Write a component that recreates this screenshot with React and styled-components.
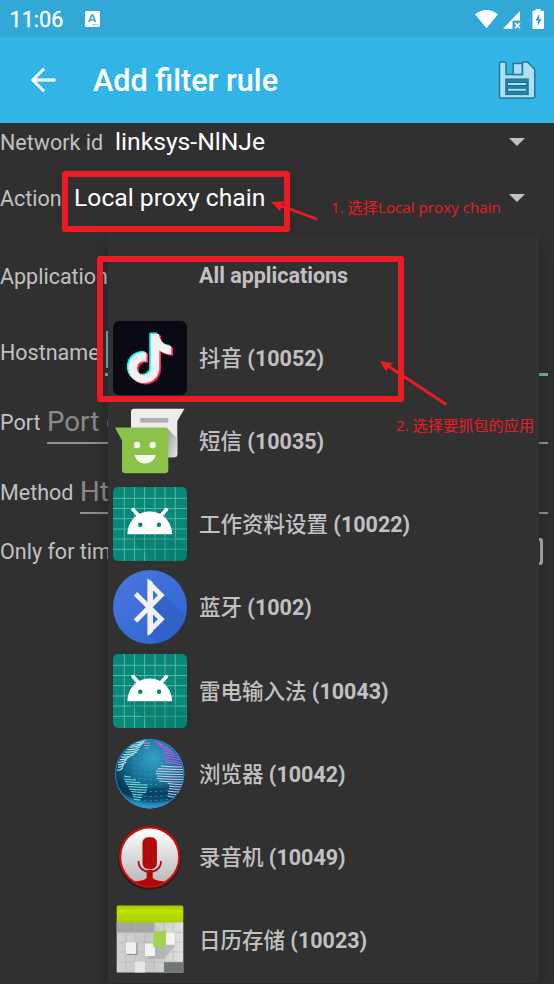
import React from 'react';
import styled, { createGlobalStyle } from 'styled-components';

const GlobalStyle = createGlobalStyle`
  * { box-sizing: border-box; }
  html, body { margin: 0; padding: 0; background: #303030; overflow: hidden; }
  body { font-family: Roboto, "Noto Sans CJK SC", sans-serif; }
`;

const Screen = styled.div`
  position: relative;
  width: 554px;
  height: 984px;
  overflow: hidden;
  background: #303030;
  display: flex;
  flex-direction: column;
`;

const StatusBar = styled.div`
  height: 37px;
  flex: none;
  background: #32a8d6;
  display: flex;
  align-items: center;
  padding: 0 10px 0 9.500px;
  color: #fff;
`;

const Clock = styled.span`
  font-size: 21.600px;
  font-weight: 400;
  -webkit-text-stroke: 0.3px #fff;
  width: 75px;
  line-height: 37px;
  padding-top: 2px;
`;

const StatusIcons = styled.svg`
  margin-left: auto;
`;

const AppBar = styled.header`
  height: 86px;
  flex: none;
  background: #33b4e6;
  display: flex;
  align-items: center;
  padding: 0 17px 0 30px;
`;

const Title = styled.h1`
  margin: 0 auto 0 35px;
  padding-top: 2px;
  font-size: 30.600px;
  font-weight: 500;
  color: #fff;
  line-height: 36px;
`;

const Form = styled.main`
  display: flex;
  flex-direction: column;
`;

const Row = styled.div`
  height: ${(p) => p.$h}px;
  display: flex;
  align-items: center;
  padding-right: 6px;
`;

const Label = styled.label`
  font-size: 21.500px;
  line-height: 26px;
  padding-top: 2px;
  color: #c1c1c1;
  white-space: nowrap;
  flex: none;
  width: ${(p) => (p.$w ? `${p.$w}px` : 'auto')};
`;

const Select = styled.div`
  flex: 1;
  display: flex;
  align-items: center;
  justify-content: space-between;
  padding-right: 23px;
  color: #fff;
  font-size: 24.700px;
  line-height: 30px;
`;

const Caret = styled.span`
  width: 0;
  height: 0;
  border: 8px solid transparent;
  border-top-color: #c1c1c1;
  border-bottom: 0;
`;

const Input = styled.div`
  flex: 1;
  height: ${(p) => p.$h || 44}px;
  border-bottom: ${(p) => (p.$focus ? '3px solid #70b5ac' : '2px solid #919191')};
  color: #8b8b8b;
  font-size: 27.700px;
  line-height: 44px;
  white-space: nowrap;
`;

const Cursor = styled.span`
  display: block;
  width: 2px;
  height: 37px;
  margin: 2px 0 0 1px;
  background: #70b5ac;
`;

const Checkbox = styled.span`
  width: 27px;
  height: 27px;
  border: 3px solid #b0b0b0;
  border-radius: 3px;
  margin: 0 5px 0 auto;
`;

const Menu = styled.ul`
  position: absolute;
  left: 108px;
  top: 234px;
  width: 431px;
  height: 749px;
  margin: 0;
  padding: 0;
  list-style: none;
  background: #313131;
  border-radius: 3px;
  box-shadow: 0 8px 22px rgba(0, 0, 0, 0.28);
`;

const MenuItem = styled.li`
  height: 83.1px;
  display: flex;
  align-items: center;
  padding: 0 0 1px 5px;
  gap: 12px;
`;

const IconSlot = styled.span`
  display: block;
  width: 74px;
  height: 74px;
  flex: none;
`;

const ItemText = styled.span`
  font-size: 21.500px;
  font-weight: ${(p) => (p.$cjk ? 500 : 700)};
  color: #c1c1c1;
  line-height: 30px;
  padding-top: 2px;
  white-space: nowrap;
`;

const Strong = styled.b`
  font-weight: 700;
`;

const Highlight = styled.div`
  position: absolute;
  left: ${(p) => p.$x}px;
  top: ${(p) => p.$y}px;
  width: ${(p) => p.$w}px;
  height: ${(p) => p.$h}px;
  border: 6px solid #ed1c24;
  border-radius: 3px;
`;

const Note = styled.div`
  position: absolute;
  left: ${(p) => p.$x}px;
  top: ${(p) => p.$y}px;
  color: #ed1c24;
  font-family: "Open Sans", "Noto Sans CJK SC", sans-serif;
  font-size: 15.200px;
  line-height: 22px;
  white-space: nowrap;
`;

const Arrows = styled.svg`
  position: absolute;
  left: 0;
  top: 0;
  pointer-events: none;
`;

function KeyboardBadge() {
  return (
    <svg width="15" height="16" viewBox="0 0 15 16">
      <rect width="15" height="16" rx="1.5" fill="#fff" />
      <path d="M3.9 11.3 L6.8 4 H7.7 L10.6 11.3 M5 9 H9.5" fill="none" stroke="#32a8d6" strokeWidth="1.7" />
      <path d="M7.5 13.8 H13.5" stroke="#32a8d6" strokeWidth="1" strokeDasharray="1.2 .7" />
    </svg>
  );
}

function SystemIcons() {
  return (
    <StatusIcons width="69" height="20" viewBox="475 8 69 20">
      <path d="M475 13.3 Q486.500 4.500 498 13.300 L486.500 27.200 Z" fill="#fff" />
      <path d="M520 10 V19.500 H512.500 V27.800 H503 Z" fill="#fff" />
      <path d="M515 22 l5 5.300 M520 22 l-5 5.300" stroke="#fff" strokeWidth="1.600" />
      <path d="M535.500 9.800 V8 h5 v1.800 H543 a1 1 0 0 1 1 1 V27 a1 1 0 0 1-1 1 H533.500 a1 1 0 0 1-1-1 V10.800 a1 1 0 0 1 1-1Z" fill="#fff" />
      <path d="M539.300 12.800 L535.400 19.600 H537.700 V25 L541.600 18 H539.300 Z" fill="#32a8d6" />
    </StatusIcons>
  );
}

function BackArrow() {
  return (
    <svg width="28" height="26" viewBox="0 0 28 26">
      <path d="M25.500 13 H3 M14 1.700 L2.700 13 L14 24.300" fill="none" stroke="#fff" strokeWidth="2.800" />
    </svg>
  );
}

function SaveIcon() {
  return (
    <svg width="40" height="40" viewBox="0 0 40 40">
      <path d="M4.500 2 H7.500 Q9 2 9 3.500 V14.500 H25.500 V2 H30.500 L37.800 9.500 V36.500 Q37.800 38 36.500 38 H4 Q2.500 38 2.500 36.500 V3.500 Q2.500 2 4.500 2Z" fill="#ade0f5" stroke="#247793" strokeWidth="1.500" />
      <rect x="16.200" y="3.500" width="9" height="11" fill="#ade0f5" stroke="#247793" strokeWidth="1.500" />
      <rect x="8.800" y="19" width="22.400" height="15.500" fill="#2383a8" stroke="#247793" strokeWidth="1.200" />
      <path d="M10.500 24 H29.500 M10.500 29.700 H29.500" stroke="#1b6885" strokeWidth="3.800" />
      <path d="M11 24 H29 M11 29.700 H29" stroke="#ade0f5" strokeWidth="2" />
    </svg>
  );
}

const notePath =
  'M12.525.02c1.31-.02 2.61-.01 3.91-.02.08 1.53.63 3.09 1.75 4.17 1.12 1.11 2.7 1.62 4.24 1.79v4.03c-1.44-.05-2.89-.35-4.2-.97-.57-.26-1.1-.59-1.62-.93-.01 2.92.01 5.84-.02 8.75-.08 1.4-.54 2.79-1.35 3.94-1.31 1.92-3.58 3.17-5.91 3.21-1.43.08-2.86-.31-4.08-1.03-2.02-1.19-3.44-3.37-3.65-5.71-.02-.5-.03-1-.01-1.49.18-1.9 1.12-3.72 2.58-4.96 1.66-1.44 3.98-2.13 6.15-1.72.02 1.48-.04 2.96-.04 4.44-.99-.32-2.15-.23-3.02.37-.63.41-1.11 1.04-1.36 1.75-.21.51-.15 1.07-.14 1.61.24 1.64 1.82 3.02 3.5 2.87 1.12-.01 2.19-.66 2.77-1.61.19-.33.4-.67.41-1.06.1-1.79.06-3.57.07-5.36.01-4.03-.01-8.05.02-12.07z';

function MusicNoteIcon() {
  return (
    <svg width="74" height="74" viewBox="0 0 74 74">
      <rect width="74" height="74" rx="6" fill="#0a0a14" />
      <path d={notePath} transform="translate(10.600 11.600) scale(2.050)" fill="#25f4ee" />
      <path d={notePath} transform="translate(14 14.200) scale(2.050)" fill="#fe2c55" />
      <path d={notePath} transform="translate(12.300 12.900) scale(2.050)" fill="#f1f1f1" />
    </svg>
  );
}

function MessageIcon() {
  return (
    <svg width="74" height="74" viewBox="0 0 74 74">
      <defs>
        <linearGradient id="msgShade" x1="0" y1="0" x2="1" y2="1">
          <stop offset="0" stopColor="#9a9a9a" />
          <stop offset="1" stopColor="#e6e6e6" />
        </linearGradient>
      </defs>
      <path d="M21 4.700 H71.500 L64.300 17 V50 Q64.300 53.300 61 53.300 H21 Q18 53.300 18 50 V8 Q18 4.700 21 4.700Z" fill="#ececec" />
      <path d="M54 24 L64.300 34.500 V50 Q64.300 53.300 61 53.300 H54Z" fill="url(#msgShade)" />
      <rect x="27.300" y="14" width="28" height="4.600" fill="#adadad" />
      <path d="M2 23.600 H52 Q55.300 23.600 55.300 27 V66 Q55.300 69.300 52 69.300 H12.500 Q9 69.300 9 66 V36.600Z" fill="#8bc34a" />
      <circle cx="24" cy="41" r="3.200" fill="#f1f8e9" />
      <circle cx="39.700" cy="41" r="3.200" fill="#f1f8e9" />
      <path d="M21.300 51 H43 Q40 59.600 32.200 59.600 Q24.300 59.600 21.300 51Z" fill="#f7fbf0" />
    </svg>
  );
}

function AndroidIcon() {
  const lines = [11.300, 21.500, 31.600, 42, 52, 62.300];
  return (
    <svg width="74" height="74" viewBox="0 0 74 74">
      <rect width="74" height="74" rx="5" fill="#078878" />
      {lines.map((v) => (
        <path key={v} d={`M${v} 0 V74 M0 ${v} H74`} stroke="#66b8ad" strokeWidth="0.900" />
      ))}
      <path d="M14.300 47 L40 74 H69 Q74 74 74 69 V62 L59 47Z" fill="#00695c" opacity="0.250" />
      <path d="M14.300 47.300 C15 34 24 24.500 36.700 24.500 C49 24.500 58.500 34 59.200 47.300Z" fill="#fff" />
      <path d="M20 22.500 L26.500 29.500 M53.500 22.500 L47 29.500" stroke="#fff" strokeWidth="3.400" strokeLinecap="round" />
      <circle cx="27.300" cy="37.700" r="2.300" fill="#078878" />
      <circle cx="46" cy="37.700" r="2.300" fill="#078878" />
    </svg>
  );
}

function BluetoothIcon() {
  return (
    <svg width="74" height="74" viewBox="0 0 74 74">
      <defs>
        <linearGradient id="btFill" x1="0" y1="0" x2="1" y2="1">
          <stop offset="0" stopColor="#4a78de" />
          <stop offset="1" stopColor="#2f64d0" />
        </linearGradient>
      </defs>
      <circle cx="37" cy="37" r="37" fill="url(#btFill)" />
      <path d="M51 25 L73 46 Q68 67 45 73 L36 64 L50 50 L38 37Z" fill="#2a58b8" opacity="0.450" />
      <path d="M22.500 23.700 L48.300 49.300 L37 60.300 V14 L48.300 25.200 L22.500 51" fill="none" stroke="#f1f1f1" strokeWidth="4.800" />
      <path d="M34.600 10.300 H37.500 L40 12.800 V61.500 L37 64.500 H34.600Z" fill="#f1f1f1" />
    </svg>
  );
}

function GlobeIcon() {
  const west = [
    [26, 34, 3.5], [22, 33, 5.5], [18, 31, 8], [16, 29, 10], [14, 27, 12.5], [12, 26, 15], [10, 24, 17.5], [8, 21, 20], [7, 16, 22.5], [5, 14, 25], [5, 13, 27.5], [5, 11, 30], [4, 10, 33],
  ];
  const south = [
    [11, 18, 39], [11, 23, 42], [12, 27, 44.5], [13, 35, 47], [15, 34, 49.5], [16, 34, 52], [18, 33, 54.5], [19, 30, 57], [20, 29, 59.5], [21, 27, 62],
  ];
  const northEast = [[42, 50, 5], [45, 55, 7.5], [47, 58, 10], [49, 61, 12.5], [50, 64, 15], [51, 66, 17.5], [50, 67, 20], [50, 68, 22.5], [53, 69, 25]];
  const east = [
    [48, 69, 29], [45, 70, 31.5], [43, 70, 34], [43, 70, 36.5], [44, 70, 39], [44, 70, 41.5], [46, 70, 44], [55, 69, 46.5], [56, 68, 49], [56, 67, 51.5], [55, 66, 54], [55, 63, 56.5], [55, 61, 59],
  ];
  const bands = (list, color, bend) =>
    list.map(([a, b, y]) => (
      <path key={`${a}-${y}`} d={`M${a} ${y} Q${(a + b) / 2} ${y + 1} ${b} ${y + bend}`} fill="none" stroke={color} strokeWidth="1.200" />
    ));
  return (
    <svg width="74" height="74" viewBox="0 0 74 74">
      <defs>
        <radialGradient id="globeFill" cx="0.550" cy="0.280" r="0.750">
          <stop offset="0" stopColor="#35a2c8" />
          <stop offset="0.450" stopColor="#177296" />
          <stop offset="0.850" stopColor="#07304f" />
          <stop offset="1" stopColor="#2b95cb" />
        </radialGradient>
        <linearGradient id="globeGlow" x1="0" y1="0" x2="0" y2="1">
          <stop offset="0.780" stopColor="#2a9ed6" stopOpacity="0" />
          <stop offset="1" stopColor="#2a9ed6" />
        </linearGradient>
        <clipPath id="globeClip"><circle cx="36.700" cy="36.700" r="34.500" /></clipPath>
      </defs>
      <circle cx="36.700" cy="36.700" r="34.700" fill="url(#globeFill)" />
      <circle cx="36.700" cy="36.700" r="34.700" fill="url(#globeGlow)" />
      <g clipPath="url(#globeClip)">
        <ellipse cx="42" cy="58" rx="24" ry="7" fill="#06395f" opacity="0.600" />
        {[16, 21, 26, 31, 36, 41, 46, 53, 58, 62].map((y) => (
          <path key={y} d={`M20 ${y} Q38 ${y + 3} 58 ${y}`} stroke="#3399c8" strokeWidth="0.800" strokeDasharray="2.500 3" fill="none" />
        ))}
        {bands(west, '#a9e6ef', -2.5)}
        {bands(south, '#6fe9e4', 1)}
        {bands(northEast, '#c653e6', 3)}
        {bands(east, '#d5cdf0', 1)}
        <path d="M30 6 h7 M31 8.500 h6 M32 11 h4" stroke="#b79bdc" strokeWidth="1.100" />
      </g>
      <circle cx="36.700" cy="36.700" r="34.200" fill="none" stroke="#2d8fc4" strokeWidth="0.900" />
    </svg>
  );
}

function RecorderIcon() {
  return (
    <svg width="74" height="74" viewBox="0 0 74 74">
      <defs>
        <linearGradient id="micPlate" x1="0" y1="0" x2="0" y2="1">
          <stop offset="0" stopColor="#fff" />
          <stop offset="1" stopColor="#b4b4b4" />
        </linearGradient>
        <clipPath id="micClip"><circle cx="36.700" cy="37" r="29" /></clipPath>
        <pattern id="micMesh" width="2.500" height="2.500" patternUnits="userSpaceOnUse">
          <rect width="2.500" height="2.500" fill="#c00d0d" />
          <circle cx="1.200" cy="1.200" r="0.700" fill="#8f0505" />
        </pattern>
      </defs>
      <circle cx="36.700" cy="38.500" r="31.500" fill="#1f1f1f" />
      <circle cx="36.700" cy="37" r="30.800" fill="#cb0d0d" />
      <circle cx="36.700" cy="37" r="28.500" fill="url(#micPlate)" />
      <path d="M33.700 50 H39.700 V58 Q42 60.500 51.500 61.500 L44 68 H29 L21 61.500 Q31.500 60.500 33.700 58Z" fill="#b80404" clipPath="url(#micClip)" />
      <path d="M25.500 41 C25.500 48 30.500 51.800 36.700 51.800 S48 48 48 41" fill="none" stroke="#a51212" strokeWidth="1.800" />
      <rect x="29" y="17" width="15.400" height="32.400" rx="6" fill="#e9e9e9" />
      <rect x="29.900" y="17.700" width="13.600" height="31" rx="5" fill="url(#micMesh)" stroke="#b50000" strokeWidth="0.800" />
    </svg>
  );
}

function CalendarIcon() {
  return (
    <svg width="74" height="74" viewBox="0 0 74 74">
      <defs>
        <linearGradient id="calHead" x1="0" y1="0" x2="0" y2="1">
          <stop offset="0" stopColor="#a4c800" />
          <stop offset="0.300" stopColor="#bfe200" />
          <stop offset="1" stopColor="#a8d000" />
        </linearGradient>
        <linearGradient id="calBody" x1="0" y1="0" x2="1" y2="0">
          <stop offset="0" stopColor="#d0d2d2" />
          <stop offset="0.500" stopColor="#c6c8c8" />
          <stop offset="1" stopColor="#dfe1e1" />
        </linearGradient>
      </defs>
      <rect x="3.700" y="19" width="66.600" height="50.500" fill="url(#calBody)" />
      <rect x="3.700" y="19" width="37.600" height="10.500" fill="#a4a6a6" />
      <path d="M42 40 L53 29 L62 43 L51 56 L34 56Z" fill="#848686" opacity="0.350" />
      <path d="M13 19 V69.500 M22.700 19 V69.500 M32 19 V69.500 M41.300 19 V69.500 M51 19 V69.500 M60.300 19 V69.500 M3.700 29.500 H70.300 M3.700 39.200 H70.300 M3.700 49 H70.300 M3.700 59 H70.300" stroke="#b0b2b2" strokeWidth="0.600" />
      <rect x="51" y="59.200" width="19.300" height="10.300" fill="#737676" />
      <rect x="22" y="58.500" width="10" height="11" fill="#e6e6e6" />
      <path d="M14 51.500 H24 V40" fill="none" stroke="#8a8a8a" />
      <rect x="13" y="39.200" width="10" height="11.700" fill="#eee" />
      <rect x="32" y="40.500" width="10" height="12.500" fill="#f2f2f2" />
      <rect x="53" y="29.500" width="8.500" height="12.300" fill="#f4f4f4" />
      <rect x="40.300" y="28.200" width="12.800" height="16" fill="#a2d34f" />
      <rect x="3.700" y="2.600" width="66.600" height="17" rx="1.500" fill="url(#calHead)" />
    </svg>
  );
}

const apps = [
  { name: '抖音', id: 10052, Icon: MusicNoteIcon },
  { name: '短信', id: 10035, Icon: MessageIcon },
  { name: '工作资料设置', id: 10022, Icon: AndroidIcon },
  { name: '蓝牙', id: 1002, Icon: BluetoothIcon },
  { name: '雷电输入法', id: 10043, Icon: AndroidIcon },
  { name: '浏览器', id: 10042, Icon: GlobeIcon },
  { name: '录音机', id: 10049, Icon: RecorderIcon },
  { name: '日历存储', id: 10023, Icon: CalendarIcon },
];

export default function App() {
  return (
    <>
      <GlobalStyle />
      <Screen>
        <StatusBar>
          <Clock>11:06</Clock>
          <KeyboardBadge />
          <SystemIcons />
        </StatusBar>
        <AppBar>
          <BackArrow />
          <Title>Add filter rule</Title>
          <SaveIcon />
        </AppBar>
        <Form>
          <Row $h={38}>
            <Label $w={115}>Network id</Label>
            <Select>linksys-NlNJe<Caret /></Select>
          </Row>
          <Row $h={73}>
            <Label $w={74}>Action</Label>
            <Select>Local proxy chain<Caret /></Select>
          </Row>
          <Row $h={84}><Label>Application</Label></Row>
          <Row $h={68}>
            <Label $w={105}>Hostname</Label>
            <Input $focus $h={47}><Cursor /></Input>
          </Row>
          <Row $h={72}>
            <Label $w={47}>Port</Label>
            <Input>Port or range</Input>
          </Row>
          <Row $h={68}>
            <Label $w={80}>Method</Label>
            <Input>Http method</Input>
          </Row>
          <Row $h={50}>
            <Label>Only for time</Label>
            <Checkbox />
          </Row>
        </Form>

        <Menu>
          <MenuItem>
            <IconSlot />
            <ItemText>All applications</ItemText>
          </MenuItem>
          {apps.map(({ name, id, Icon }) => (
            <MenuItem key={id}>
              <IconSlot><Icon /></IconSlot>
              <ItemText $cjk>{name} <Strong>({id})</Strong></ItemText>
            </MenuItem>
          ))}
        </Menu>

        <Highlight $x={62} $y={171} $w={228} $h={61} />
        <Highlight $x={97} $y={256} $w={307} $h={146} />
        <Note $x={331} $y={196}>1. 选择Local proxy chain</Note>
        <Note $x={396} $y={414}>2. 选择要抓包的应用</Note>
        <Arrows width="554" height="984" viewBox="0 0 554 984">
          <g stroke="#ed1c24" strokeWidth="2.800" strokeLinecap="round" fill="#ed1c24">
            <path d="M280 205.500 L316 218.800" />
            <path d="M388 366 L445.500 404" />
          </g>
          <path d="M271 202 L284.500 201.300 L282 205.800 L280 211Z" fill="#ed1c24" />
          <path d="M380 361 L393 363.300 L389 366.500 L386 371.500Z" fill="#ed1c24" />
        </Arrows>
      </Screen>
    </>
  );
}
